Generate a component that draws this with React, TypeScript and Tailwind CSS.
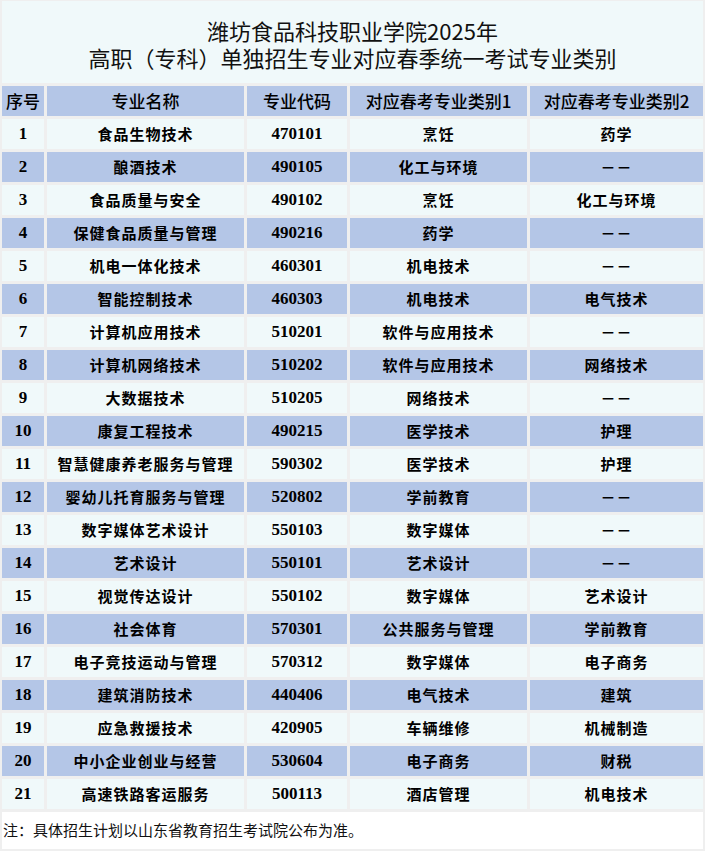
const rows: [string, string, string, string, string][] = [
  ["1", "食品生物技术", "470101", "烹饪", "药学"],
  ["2", "酿酒技术", "490105", "化工与环境", "－－"],
  ["3", "食品质量与安全", "490102", "烹饪", "化工与环境"],
  ["4", "保健食品质量与管理", "490216", "药学", "－－"],
  ["5", "机电一体化技术", "460301", "机电技术", "－－"],
  ["6", "智能控制技术", "460303", "机电技术", "电气技术"],
  ["7", "计算机应用技术", "510201", "软件与应用技术", "－－"],
  ["8", "计算机网络技术", "510202", "软件与应用技术", "网络技术"],
  ["9", "大数据技术", "510205", "网络技术", "－－"],
  ["10", "康复工程技术", "490215", "医学技术", "护理"],
  ["11", "智慧健康养老服务与管理", "590302", "医学技术", "护理"],
  ["12", "婴幼儿托育服务与管理", "520802", "学前教育", "－－"],
  ["13", "数字媒体艺术设计", "550103", "数字媒体", "－－"],
  ["14", "艺术设计", "550101", "艺术设计", "－－"],
  ["15", "视觉传达设计", "550102", "数字媒体", "艺术设计"],
  ["16", "社会体育", "570301", "公共服务与管理", "学前教育"],
  ["17", "电子竞技运动与管理", "570312", "数字媒体", "电子商务"],
  ["18", "建筑消防技术", "440406", "电气技术", "建筑"],
  ["19", "应急救援技术", "420905", "车辆维修", "机械制造"],
  ["20", "中小企业创业与经营", "530604", "电子商务", "财税"],
  ["21", "高速铁路客运服务", "500113", "酒店管理", "机电技术"],
];

const headers = ["序号", "专业名称", "专业代码", "对应春考专业类别1", "对应春考专业类别2"];

const cjk = "font-['Noto_Sans_CJK_SC',sans-serif]";
const num = "font-['Liberation_Serif','Noto_Sans_CJK_SC',serif]";

export default function App() {
  return (
    <div className={`w-[705px] h-[851px] bg-[#efefef] px-[2px] pt-[1px] ${cjk}`}>
      <div className="grid grid-cols-[42px_197px_100px_177px_173px] gap-[3px]">
        <div className="col-span-5 h-[82px] bg-[#f0f9fa] flex flex-col items-center justify-center gap-[5px] text-[22px] leading-none text-[#111] pt-[3px]">
          <div>潍坊食品科技职业学院2025年</div>
          <div>高职（专科）单独招生专业对应春季统一考试专业类别</div>
        </div>

        {headers.map((h) => (
          <div key={h} className="h-[30px] bg-[#b4c6e7] flex items-center justify-center text-[17px] font-medium text-black whitespace-nowrap">
            {h}
          </div>
        ))}

        {rows.map((r, i) => {
          const bg = i % 2 === 1 ? "bg-[#b4c6e7]" : "bg-[#f0f9fa]";
          return r.map((c, j) => (
            <div
              key={`${i}-${j}`}
              className={`h-[30px] ${bg} flex items-center justify-center font-bold text-black whitespace-nowrap ${
                j === 0 || j === 2 ? `${num} text-[17px]` : "text-[15px] tracking-[1px]"
              }`}
            >
              {c}
            </div>
          ));
        })}

        <div className="col-span-5 h-[37px] bg-white flex items-center pl-[1px] text-[15px] text-[#111]">
          注：具体招生计划以山东省教育招生考试院公布为准。
        </div>
      </div>
    </div>
  );
}
